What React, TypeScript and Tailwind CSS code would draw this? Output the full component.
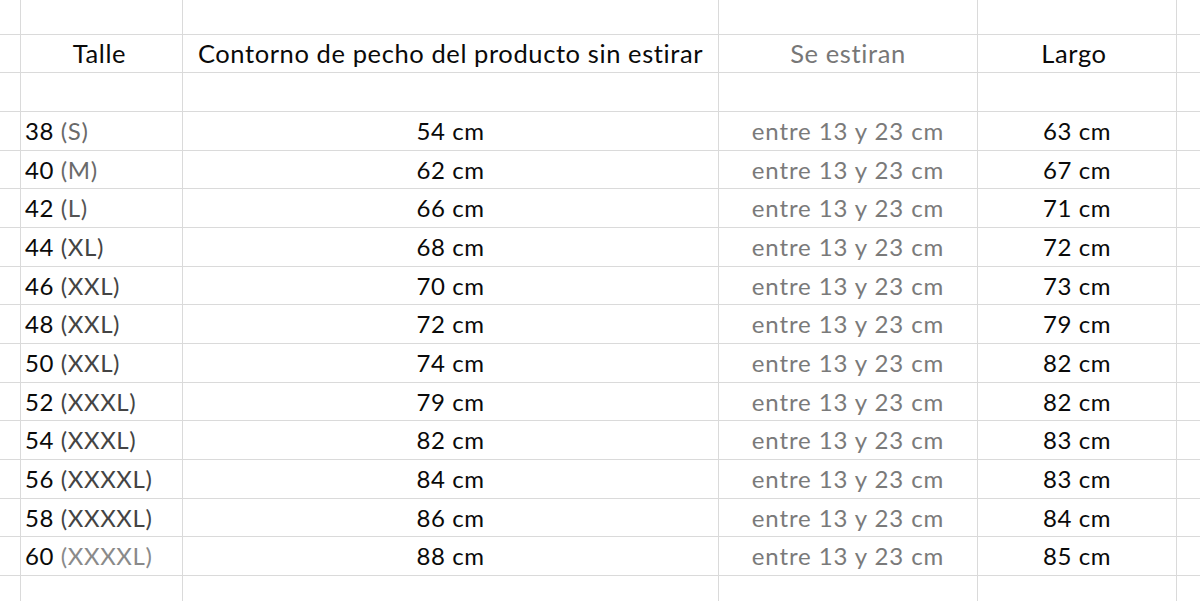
const ROW_H = [
  "h-[39px]",
  "h-[38px]",
  "h-[39px]",
  "h-[39px]",
  "h-[38px]",
  "h-[39px]",
  "h-[39px]",
  "h-[38px]",
  "h-[39px]",
  "h-[39px]",
  "h-[38px]",
  "h-[39px]",
];

const rows = [
  { talle: "38", size: "(S)", tone: "text-[#6a6a6a]", pecho: "54 cm", largo: "63 cm" },
  { talle: "40", size: "(M)", tone: "text-[#6a6a6a]", pecho: "62 cm", largo: "67 cm" },
  { talle: "42", size: "(L)", tone: "text-[#555]", pecho: "66 cm", largo: "71 cm" },
  { talle: "44", size: "(XL)", tone: "text-[#444]", pecho: "68 cm", largo: "72 cm" },
  { talle: "46", size: "(XXL)", tone: "text-[#444]", pecho: "70 cm", largo: "73 cm" },
  { talle: "48", size: "(XXL)", tone: "text-[#444]", pecho: "72 cm", largo: "79 cm" },
  { talle: "50", size: "(XXL)", tone: "text-[#444]", pecho: "74 cm", largo: "82 cm" },
  { talle: "52", size: "(XXXL)", tone: "text-[#444]", pecho: "79 cm", largo: "82 cm" },
  { talle: "54", size: "(XXXL)", tone: "text-[#444]", pecho: "82 cm", largo: "83 cm" },
  { talle: "56", size: "(XXXXL)", tone: "text-[#444]", pecho: "84 cm", largo: "83 cm" },
  { talle: "58", size: "(XXXXL)", tone: "text-[#444]", pecho: "86 cm", largo: "84 cm" },
  { talle: "60", size: "(XXXXL)", tone: "text-[#8a8a8a]", pecho: "88 cm", largo: "85 cm" },
];

// one spreadsheet row: gutter | talle | pecho | estiran | largo | gutter
function Row({
  h,
  cells,
}: {
  h: string;
  cells: [React.ReactNode, React.ReactNode, React.ReactNode, React.ReactNode];
}) {
  const cell = "border-r border-b border-[#dadada] flex items-center shrink-0";
  return (
    <div className={`flex ${h}`}>
      <div className={`${cell} w-[21px]`} />
      <div className={`${cell} w-[162px]`}>{cells[0]}</div>
      <div className={`${cell} w-[536px] justify-center`}>{cells[1]}</div>
      <div className={`${cell} w-[259px] justify-center`}>{cells[2]}</div>
      <div className={`${cell} w-[199px] justify-center`}>{cells[3]}</div>
      <div className="border-b border-[#dadada] flex-1" />
    </div>
  );
}

export default function App() {
  return (
    <div className="w-[1200px] h-[601px] overflow-hidden bg-white text-[#0a0a0a] font-['Lato',sans-serif] text-[24px] tracking-[0.6px]">
      <Row h="h-[35px]" cells={[null, null, null, null]} />
      <Row
        h="h-[38px]"
        cells={[
          <span className="w-full text-center pr-[4px] text-[25.5px]">Talle</span>,
          <span className="text-[25.5px]">Contorno de pecho del producto sin estirar</span>,
          <span className="text-[#777] text-[25.5px]">Se estiran</span>,
          <span className="text-[25.5px] pr-[6px]">Largo</span>,
        ]}
      />
      <Row h="h-[39px]" cells={[null, null, null, null]} />
      {rows.map((r, i) => (
        <Row
          key={r.talle}
          h={ROW_H[i]}
          cells={[
            <span className="pl-[4px]">
              {r.talle} <span className={r.tone}>{r.size}</span>
            </span>,
            <span>{r.pecho}</span>,
            <span className="text-[#7a7a7a] tracking-[0.9px]">entre 13 y 23 cm</span>,
            <span>{r.largo}</span>,
          ]}
        />
      ))}
      <div className="flex h-[40px]">
        <div className="border-r border-[#dadada] w-[21px] shrink-0" />
        <div className="border-r border-[#dadada] w-[162px] shrink-0" />
        <div className="border-r border-[#dadada] w-[536px] shrink-0" />
        <div className="border-r border-[#dadada] w-[259px] shrink-0" />
        <div className="border-r border-[#dadada] w-[199px] shrink-0" />
      </div>
    </div>
  );
}
